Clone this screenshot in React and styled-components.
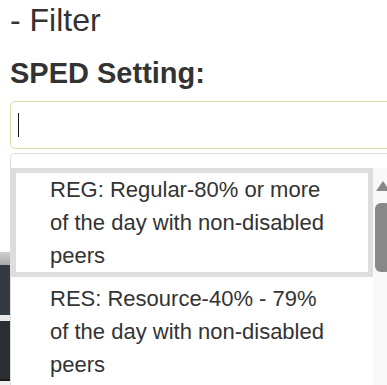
import React from "react";
import styled, { createGlobalStyle } from "styled-components";

const GlobalStyle = createGlobalStyle`
  html, body {
    margin: 0;
    padding: 0;
    background: #fff;
    overflow: hidden;
  }
  body {
    font-family: "Liberation Sans", Arial, sans-serif;
    color: #333;
  }
`;

const Page = styled.div`
  width: 387px;
  height: 385px;
  overflow: hidden;
  position: relative;
`;

const Title = styled.h2`
  margin: 2px 0 0 10px;
  font-size: 32px;
  font-weight: 400;
  line-height: 36px;
  color: #333;
`;

const Label = styled.label`
  display: block;
  margin: 18px 0 0 10px;
  font-size: 29px;
  font-weight: 700;
  line-height: 34px;
  color: #333;
`;

const Field = styled.div`
  position: relative;
  margin: 11px 0 0 10px;
  width: 420px;
`;

const InputBox = styled.div`
  box-sizing: border-box;
  height: 48px;
  border: 1px solid #cde4a6;
  border-radius: 5px;
  padding: 11px 0 0 7px;
  background: #fff;
`;

const Caret = styled.span`
  display: block;
  width: 1px;
  height: 24px;
  background: #1a1a1a;
`;

const Dropdown = styled.div`
  position: absolute;
  top: calc(100% + 4px);
  left: 0;
  width: 385px;
  height: 240px;
  box-sizing: border-box;
  border: 1px solid #dedede;
  border-bottom: none;
  border-radius: 5px 0 0 0;
  background: #fff;
  padding-top: 14px;
  display: flex;
  overflow: hidden;
  z-index: 2;
`;

const OptionList = styled.ul`
  list-style: none;
  margin: 0;
  padding: 0;
  width: 362px;
  flex-shrink: 0;
`;

const Option = styled.li`
  box-sizing: border-box;
  border: 5px solid ${(p) => (p.$active ? "#dcdedd" : "transparent")};
  padding: 0 36px 0 34px;
  font-size: 22px;
  line-height: 33px;
  color: #333;
`;

const Track = styled.div`
  flex: 1;
  background: #f8f8f8;
  display: flex;
  flex-direction: column;
  align-items: center;
  padding-right: 2px;
`;

const Arrow = styled.svg`
  margin-top: 13px;
  width: 14px;
  height: 10px;
  flex-shrink: 0;
`;

const Thumb = styled.div`
  margin-top: 12px;
  width: 16px;
  height: 69px;
  border-radius: 6px;
  background: #888;
`;

const Backdrop = styled.div`
  margin-top: 103px;
  width: 40px;
`;

const Shade = styled.div`
  height: 13px;
  background: linear-gradient(#cfcfcf, #a9a9a9);
`;

const Band = styled.div`
  height: ${(p) => p.$h}px;
  background: ${(p) => p.$c};
`;

const options = [
  "REG: Regular-80% or more of the day with non-disabled peers",
  "RES: Resource-40% - 79% of the day with non-disabled peers",
];

export default function App() {
  return (
    <Page>
      <GlobalStyle />
      <Title>- Filter</Title>
      <Label>SPED Setting:</Label>
      <Field>
        <InputBox>
          <Caret />
        </InputBox>
        <Dropdown>
          <OptionList>
            {options.map((o, i) => (
              <Option key={o} $active={i === 0}>
                {o}
              </Option>
            ))}
          </OptionList>
          <Track>
            <Arrow viewBox="0 0 14 10">
              <path d="M7 0 L14 10 L0 10 Z" fill="#888" />
            </Arrow>
            <Thumb />
          </Track>
        </Dropdown>
      </Field>
      <Backdrop>
        <Shade />
        <Band $h={50} $c="#343a42" />
        <Band $h={6} $c="#e8e8e8" />
        <Band $h={58} $c="#2a2e32" />
        <Band $h={2} $c="#1c1c1c" />
        <Band $h={20} $c="#f0f0f0" />
      </Backdrop>
    </Page>
  );
}
